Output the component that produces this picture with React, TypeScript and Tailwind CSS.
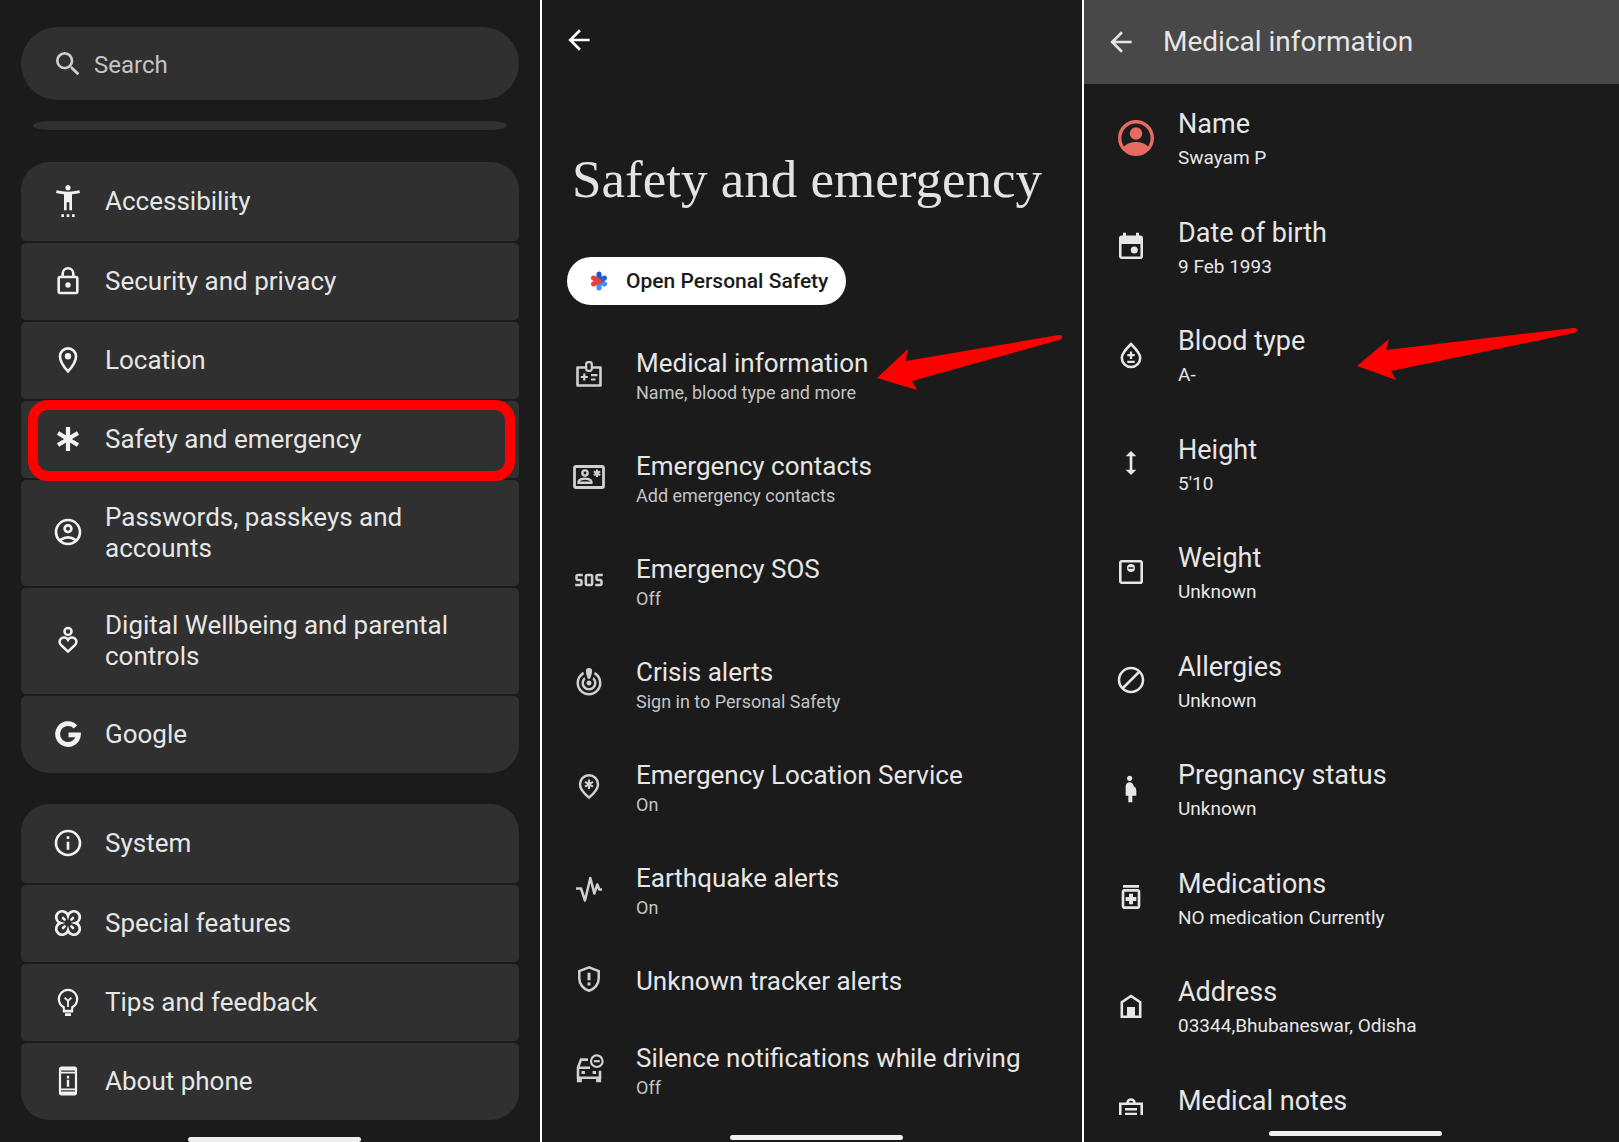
import type { ReactNode } from "react";
import {
  MdArrowBack,
  MdCrisisAlert,
  MdHeight,
  MdOutlineAccountCircle,
  MdOutlineInfo,
  MdOutlineMedication,
  MdPregnantWoman,
  MdSearch,
  MdSettingsAccessibility,
  MdSos,
} from "react-icons/md";

type Item = { icon: ReactNode; title: string; sub?: string; marked?: boolean };

// line icon on a 32 grid
function Line({ children, w = 2.6 }: { children: ReactNode; w?: number }) {
  return (
    <svg viewBox="0 0 32 32" className="size-8" fill="none" stroke="currentColor" strokeWidth={w} aria-hidden="true">
      {children}
    </svg>
  );
}

const mainItems: Item[] = [
  { icon: <MdSettingsAccessibility className="size-8" />, title: "Accessibility" },
  {
    icon: (
      <Line>
        <rect x="6.7" y="12" width="18.6" height="16" rx="1.4" />
        <path d="M10.7 12V8.6a5.3 5.3 0 0 1 10.6 0V12" />
        <circle cx="16" cy="20" r="2.7" fill="currentColor" stroke="none" />
      </Line>
    ),
    title: "Security and privacy",
  },
  {
    icon: (
      <Line>
        <path d="M16 27.4C10.6 21.4 8 16.8 8 12.4a8 8 0 0 1 16 0c0 4.4-2.6 9-8 15z" />
        <circle cx="16" cy="12.3" r="3.2" fill="currentColor" stroke="none" />
      </Line>
    ),
    title: "Location",
  },
  {
    icon: (
      <Line w={4.2}>
        <path d="M16 4v24M6 10l20 12M26 10L6 22" />
      </Line>
    ),
    title: "Safety and emergency",
    marked: true,
  },
  { icon: <MdOutlineAccountCircle className="size-8" />, title: "Passwords, passkeys and accounts" },
  {
    icon: (
      <Line w={2.5}>
        <circle cx="16" cy="7.4" r="3.5" />
        <path d="M16 27.600l-7-6.600a4.300 4.300 0 0 1 0-6.400 4.600 4.600 0 0 1 7 1.200 4.600 4.600 0 0 1 7-1.200 4.300 4.300 0 0 1 0 6.400z" />
      </Line>
    ),
    title: "Digital Wellbeing and parental controls",
  },
  {
    icon: (
      <Line w={4.8}>
        <path d="M23.5 8.8A10.4 10.4 0 1 0 26.4 16.8H16.5" />
      </Line>
    ),
    title: "Google",
  },
];

const systemItems: Item[] = [
  { icon: <MdOutlineInfo className="size-8" />, title: "System" },
  {
    icon: (
      <Line>
        <path d="M16 8.6A6 6 0 1 1 23.4 16 6 6 0 1 1 16 23.4 6 6 0 1 1 8.6 16 6 6 0 1 1 16 8.6z" />
        <path d="M12.6 12.6l-1.6-1.6M19.4 12.6l1.6-1.6M12.6 19.4l-1.6 1.6M19.4 19.4l1.6 1.6" strokeLinecap="round" />
      </Line>
    ),
    title: "Special features",
  },
  {
    icon: (
      <Line w={2.1}>
        <path d="M11.8 21.3a9.2 9.2 0 1 1 8.4 0V25h-8.400z" />
        <path d="M16 21v-6M12.6 11.7L16 15l3.4-3.3" strokeWidth="1.8" />
        <path d="M11 25.2h10M13 28.6h6" strokeWidth="2.8" />
      </Line>
    ),
    title: "Tips and feedback",
  },
  {
    icon: (
      <Line w={2.2}>
        <rect x="8" y="2.6" width="16" height="26.8" rx="1.6" />
        <path d="M8 4.2h16M8 27.8h16" strokeWidth="2.6" />
        <path d="M8 7.6h16M8 24.4h16" strokeWidth="1.8" />
        <path d="M16 10.8v2.6M16 14.8v7" strokeWidth="2.4" />
      </Line>
    ),
    title: "About phone",
  },
];

const safetyItems: Item[] = [
  {
    icon: (
      <Line>
        <path d="M13 9.5H4.5v18h23v-18H19" strokeLinejoin="round" />
        <rect x="13.2" y="4.2" width="5.6" height="8.6" rx="2" strokeWidth="2.2" />
        <path d="M7.8 19h7M11.3 15.5v7M18 17.2h6.5M18 21.5h4.5" strokeWidth="2.2" />
      </Line>
    ),
    title: "Medical information",
    sub: "Name, blood type and more",
  },
  {
    icon: (
      <Line w={2.8}>
        <rect x="1.5" y="5.5" width="29" height="21" rx="1.5" />
        <circle cx="12" cy="12" r="2.6" strokeWidth="2.4" />
        <path d="M5.6 21.8v-1.2c0-1.8 3.8-3 6.4-3s6.4 1.2 6.4 3v1.2z" strokeWidth="2.4" />
        <path d="M24 8.4v7.6M20.8 10.3l6.4 3.8M27.2 10.3l-6.4 3.8" strokeWidth="2" />
      </Line>
    ),
    title: "Emergency contacts",
    sub: "Add emergency contacts",
  },
  { icon: <MdSos className="size-[30px]" />, title: "Emergency SOS", sub: "Off" },
  { icon: <MdCrisisAlert className="size-[30px]" />, title: "Crisis alerts", sub: "Sign in to Personal Safety" },
  {
    icon: (
      <Line w={2.5}>
        <path d="M16 27.6c-6-5-9-9-9-13.4a9 9 0 0 1 18 0c0 4.4-3 8.4-9 13.4z" />
        <path d="M16 9.5v9.4M12 11.9l8 4.7M20 11.9l-8 4.7" strokeWidth="2.2" />
      </Line>
    ),
    title: "Emergency Location Service",
    sub: "On",
  },
  {
    icon: (
      <Line w={2.5}>
        <path d="M3 15.5h5l4 12L17.3 5l4 15.5 3-9 2 5H29" strokeLinejoin="round" />
      </Line>
    ),
    title: "Earthquake alerts",
    sub: "On",
  },
  {
    icon: (
      <Line w={2.5}>
        <path d="M16 4.4L6.3 8v7.5c0 5.7 4 10.6 9.7 12.3 5.7-1.7 9.7-6.6 9.7-12.3V8z" />
        <path d="M16 9.8v7.4M16 19.4v3" strokeWidth="3" />
      </Line>
    ),
    title: "Unknown tracker alerts",
  },
  {
    icon: (
      <Line w={2.6}>
        <path d="M15 6.6H8L5 14.6v10.2h22v-7M5 14.8h12M5.2 24v4h2.4v-3M24.4 25v3h2.4v-4" />
        <path d="M8.5 19.5h3.400M19.6 19.5H23" strokeWidth="3.2" />
        <circle cx="23.8" cy="8.2" r="5.8" strokeWidth="2.2" />
        <path d="M20.8 8.2h6" strokeWidth="2.2" />
      </Line>
    ),
    title: "Silence notifications while driving",
    sub: "Off",
  },
];

const medicalItems: Item[] = [
  {
    icon: (
      <svg viewBox="0 0 36 36" className="ml-[3px] size-9 text-[#e66b63]" fill="currentColor" aria-hidden="true">
        <circle cx="18" cy="18" r="16.3" fill="none" stroke="currentColor" strokeWidth="3.4" />
        <circle cx="18" cy="13.5" r="6.2" />
        <path d="M5.5 27c3-3.6 7.5-5 12.5-5s9.5 1.4 12.5 5A16 16 0 0 1 18 34 16 16 0 0 1 5.5 27z" />
      </svg>
    ),
    title: "Name",
    sub: "Swayam P",
  },
  {
    icon: (
      <Line>
        <rect x="5.3" y="6.8" width="21.4" height="20.9" rx="1.5" />
        <path d="M5 6h22v8H5zM8 2.7h3V7H8zM21 2.7h3V7h-3z" fill="currentColor" stroke="none" />
        <circle cx="19.3" cy="20" r="3.5" fill="currentColor" stroke="none" />
      </Line>
    ),
    title: "Date of birth",
    sub: "9 Feb 1993",
  },
  {
    icon: (
      <Line>
        <path d="M16 5C10 11 6.8 14.8 6.8 18.8a9.2 9.2 0 0 0 18.4 0C25.2 14.8 22 11 16 5z" />
        <path d="M12.3 16.2h7.4M16 12.5v7.4M12.3 22.8h7.4" strokeWidth="2.3" />
      </Line>
    ),
    title: "Blood type",
    sub: "A-",
  },
  { icon: <MdHeight className="size-8" />, title: "Height", sub: "5'10" },
  {
    icon: (
      <Line>
        <rect x="5.3" y="5.3" width="21.4" height="21.4" rx="1.5" />
        <circle cx="16" cy="12" r="4" fill="currentColor" stroke="none" />
        <path d="M13.5 12h5" stroke="#1b1b1b" strokeWidth="1.5" />
      </Line>
    ),
    title: "Weight",
    sub: "Unknown",
  },
  {
    icon: (
      <Line w={2.5}>
        <circle cx="16" cy="16" r="12" />
        <path d="M8 24L24 8" />
      </Line>
    ),
    title: "Allergies",
    sub: "Unknown",
  },
  { icon: <MdPregnantWoman className="size-8" />, title: "Pregnancy status", sub: "Unknown" },
  { icon: <MdOutlineMedication className="size-8" />, title: "Medications", sub: "NO medication Currently" },
  {
    icon: (
      <Line>
        <path d="M6.8 26.7V12.3L16 6l9.2 6.3v14.400z" />
        <path d="M12 17h8v10h-8z" fill="currentColor" stroke="none" />
      </Line>
    ),
    title: "Address",
    sub: "03344,Bhubaneswar, Odisha",
  },
];

function SettingsGroup({ items }: { items: Item[] }) {
  return (
    <ul className="flex flex-col gap-0.5">
      {items.map((item) => (
        <li key={item.title} className="group relative">
          <button className="flex min-h-[77px] w-full items-center gap-[21px] rounded-[5px] bg-[#303030] py-5 pr-8 pl-[31px] text-left group-first:min-h-[79px] group-first:rounded-t-[28px] group-last:rounded-b-[28px]">
            <span className="shrink-0 pb-0.5 text-[#f2f2f2]">{item.icon}</span>
            <span className="py-0.5 text-[26px] leading-[31px]">{item.title}</span>
          </button>
          {item.marked && (
            <span className="pointer-events-none absolute -top-px right-1 -bottom-[3px] left-[7px] z-10 rounded-[20px] border-10 border-[#fe0000]" />
          )}
        </li>
      ))}
    </ul>
  );
}

function HomeBar() {
  return <div className="ml-2 h-[5px] w-[173px] shrink-0 self-center rounded-full bg-[#f0f0f0]" />;
}

function SettingsScreen() {
  return (
    <section className="flex min-w-0 flex-col overflow-hidden px-[21px] pt-[27px]">
      <label className="flex h-[73px] items-center gap-2.5 rounded-full bg-[#303030] pr-8 pl-[31px] text-[#cfcfcf]">
        <MdSearch className="size-8 shrink-0" />
        <input
          type="search"
          aria-label="Search settings"
          placeholder="Search"
          className="w-full bg-transparent pt-0.5 text-[24px] leading-[30px] outline-none placeholder:text-[#c4c4c4]"
        />
      </label>
      <div className="mx-3 mt-[21px] mb-8 h-[9px] rounded-[20px/5px] bg-[#303030]" />
      <SettingsGroup items={mainItems} />
      <div className="h-[31px]" />
      <SettingsGroup items={systemItems} />
      <div className="mt-auto flex flex-col">
        <HomeBar />
      </div>
    </section>
  );
}

function SafetyScreen() {
  return (
    <section className="flex min-w-0 flex-col overflow-hidden border-l-2 border-white">
      <button aria-label="Back" className="mt-6 ml-[21px] self-start text-white">
        <MdArrowBack className="size-8" />
      </button>
      <h1 className="mt-[88px] ml-[30px] font-['Liberation_Serif',serif] text-[53px] leading-[70px] whitespace-nowrap text-[#e3e3e3]">
        Safety and emergency
      </h1>
      <button className="mt-[43px] ml-[25px] flex h-12 items-center gap-[18px] self-start rounded-full bg-white pr-[18px] pl-[23px] text-[21px] font-medium text-[#1b1b1b]">
        <svg viewBox="0 0 18 20" className="h-5 w-[18px]" fill="none" strokeWidth="5" strokeLinecap="round" aria-hidden="true">
          <path d="M9 10V17" stroke="#4a8af4" />
          <path d="M9 10l5.5 3" stroke="#4a8af4" />
          <path d="M9 10l5.5-3" stroke="#1c62d6" />
          <path d="M9 10V3" stroke="#1a56c4" />
          <path d="M9 10L3.5 7M9 10l-5.5 3" stroke="#e8403a" />
        </svg>
        <span className="pt-0.5">Open Personal Safety</span>
      </button>
      <ul className="mt-[17px]">
        {safetyItems.map((item) => (
          <li key={item.title} className="relative">
            <button className="flex min-h-[77px] w-full pl-[31px] text-left">
              <span className="flex w-8 shrink-0 justify-center self-center text-[#d0d0d0]">{item.icon}</span>
              <span className="flex flex-col pt-[26px] pl-[31px]">
                <span className="text-[26px] leading-[30px]">{item.title}</span>
                {item.sub && <span className="pb-[18px] text-[18px] leading-[29px] text-[#c4c4c4]">{item.sub}</span>}
              </span>
            </button>
            {item.title === "Medical information" && (
              <svg viewBox="0 0 190 60" className="pointer-events-none absolute top-[11px] left-[333px] h-[60px] w-[190px]" aria-hidden="true">
                <path d="M2 45L33 16l-2.4 12L184 2q3-.5 3 2t-3 3L37 48l5 9z" fill="#fe0000" />
              </svg>
            )}
          </li>
        ))}
      </ul>
      <div className="mt-auto mb-0.5 flex flex-col">
        <HomeBar />
      </div>
    </section>
  );
}

function MedicalScreen() {
  return (
    <section className="flex min-w-0 flex-col overflow-hidden border-l-2 border-white">
      <header className="flex h-[84px] shrink-0 items-center gap-[26px] bg-[#484848] pl-[21px]">
        <button aria-label="Back">
          <MdArrowBack className="size-8" />
        </button>
        <h2 className="text-[28px] leading-9">Medical information</h2>
      </header>
      <ul>
        {medicalItems.map((item) => (
          <li key={item.title} className="relative odd:h-[109px] even:h-[108px]">
            <button className="flex h-full w-full pl-[31px] text-left">
              <span className="flex w-[63px] shrink-0 self-center pb-0.5">{item.icon}</span>
              <span className="flex flex-col pt-[22px]">
                <span className="text-[27px] leading-9">{item.title}</span>
                <span className="text-[19px] leading-[31px]">{item.sub}</span>
              </span>
            </button>
            {item.title === "Blood type" && (
              <svg viewBox="0 0 224 56" className="pointer-events-none absolute top-[25px] left-[271px] h-14 w-[224px]" aria-hidden="true">
                <path d="M2 40L34 13l-3 11L219 2q3-.5 3 2t-3 3L36 45l5 9z" fill="#fe0000" />
              </svg>
            )}
          </li>
        ))}
        <li>
          <button className="flex pl-[31px] text-left">
            {/* icon is cut by the edge of the scroll area */}
            <span className="h-[54px] w-[63px] shrink-0 overflow-hidden pt-9">
              <Line>
                <path d="M5.3 30V6.8h21.400V30M10 12.3h12M10 17h12" />
                <path d="M12.5 6a3.5 3.5 0 0 1 7 0" />
              </Line>
            </span>
            <span className="pt-[22px] text-[27px] leading-9">Medical notes</span>
          </button>
        </li>
      </ul>
      <div className="mt-auto mb-1.5 flex flex-col">
        <HomeBar />
      </div>
    </section>
  );
}

export default function App() {
  return (
    <main className="grid min-h-screen grid-cols-[540fr_542fr_537fr] bg-[#1b1b1b] font-['Roboto',sans-serif] text-[#e6e6e6]">
      <SettingsScreen />
      <SafetyScreen />
      <MedicalScreen />
    </main>
  );
}
